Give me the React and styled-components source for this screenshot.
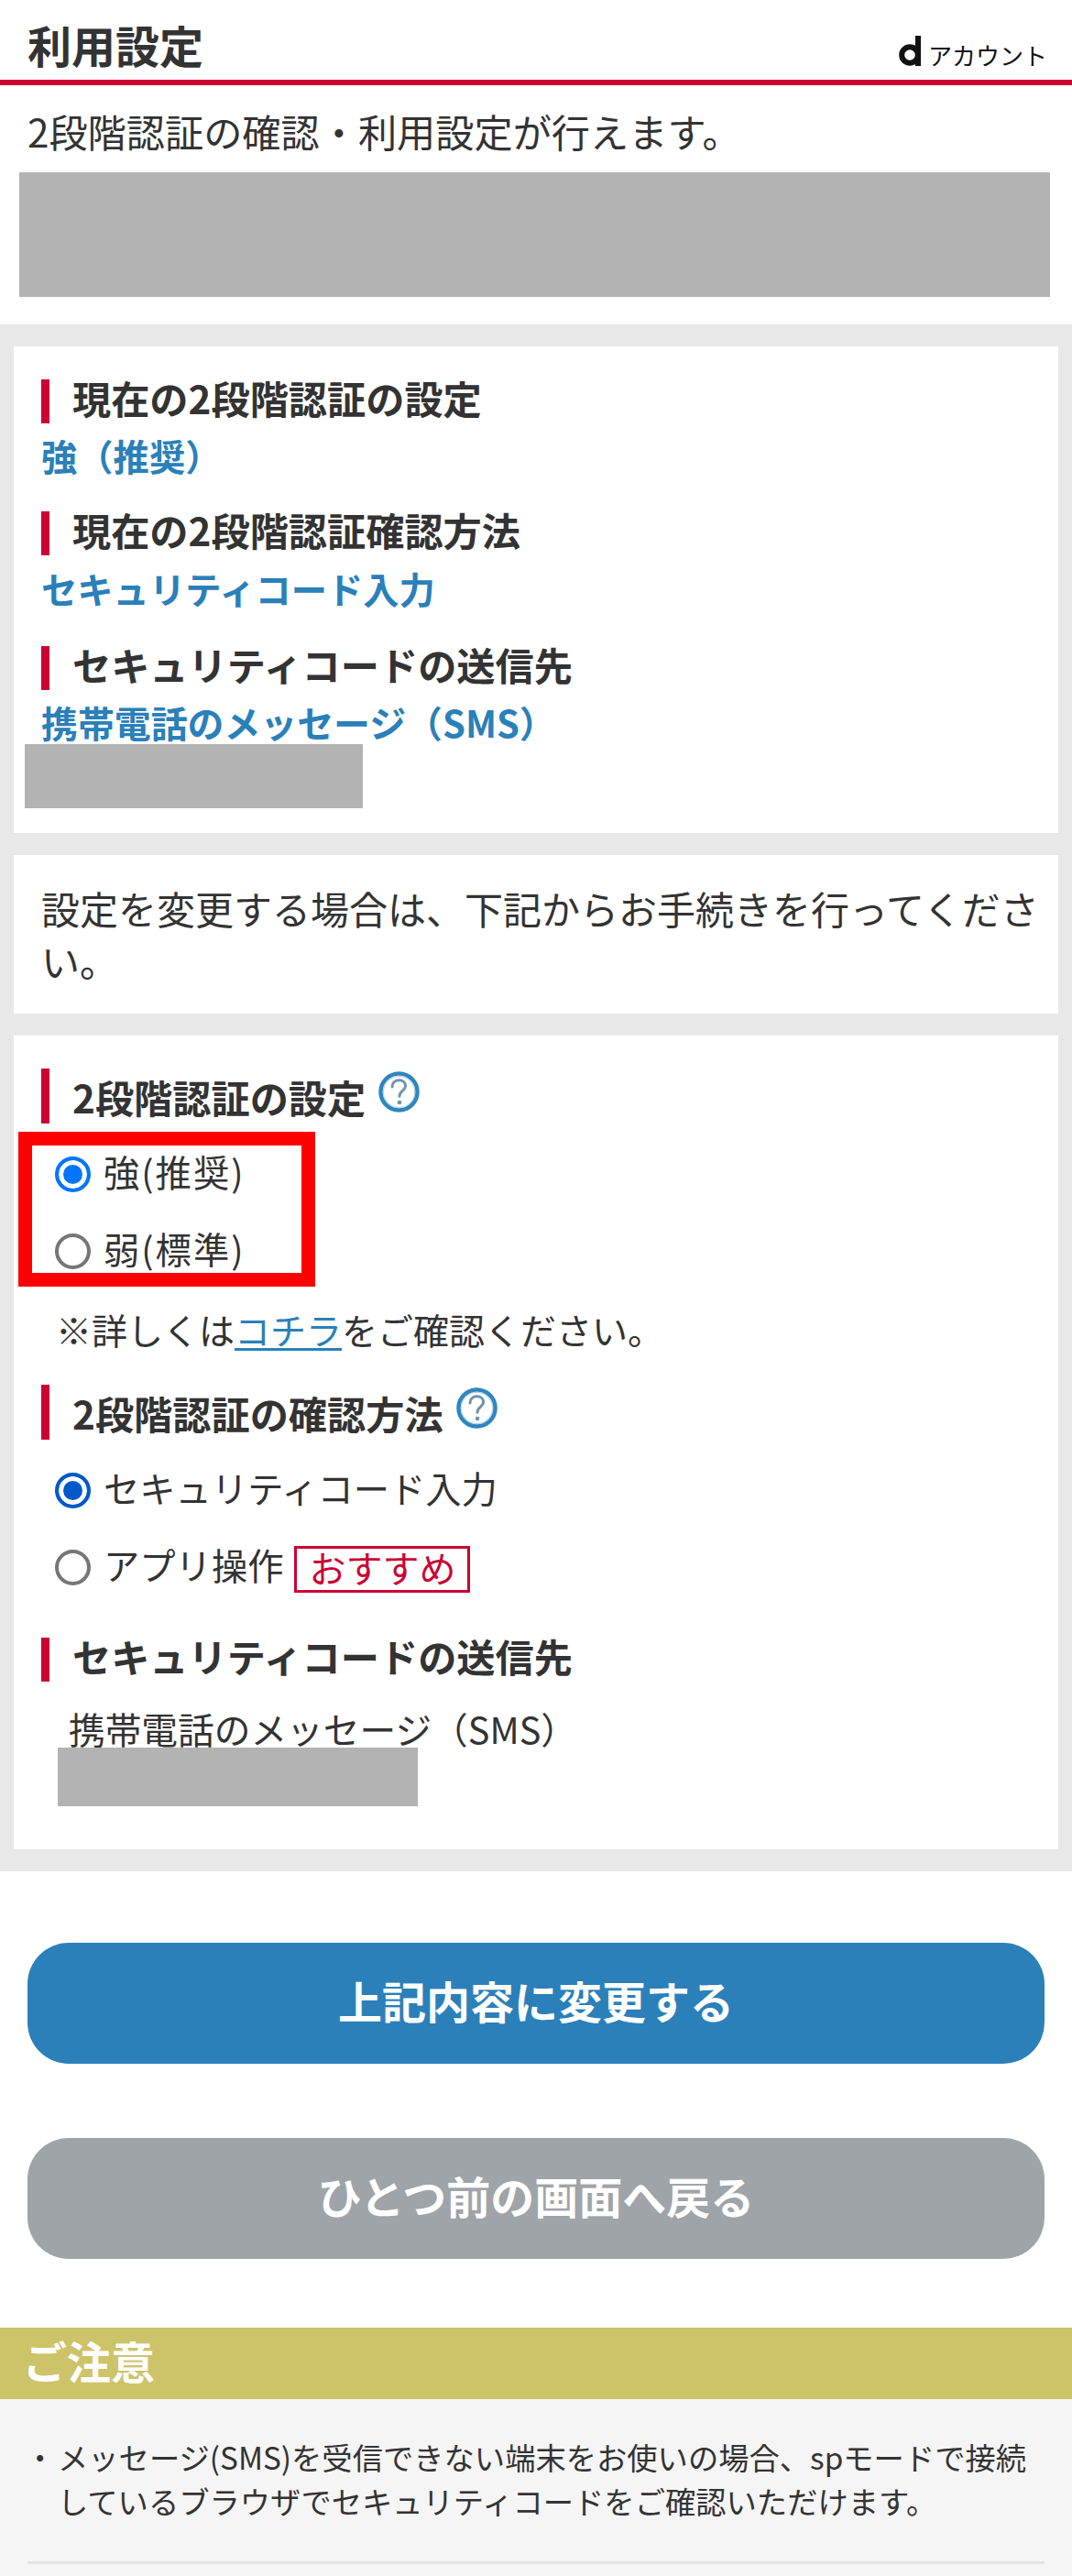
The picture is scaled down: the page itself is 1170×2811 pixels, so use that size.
import React from "react";
import styled, { createGlobalStyle } from "styled-components";

const Global = createGlobalStyle`
  html, body { margin: 0; padding: 0; background: #fff; }
  body { font-family: "Noto Sans CJK JP", "Noto Sans", sans-serif; color: #333; }
  * { box-sizing: border-box; }
`;

const Page = styled.div`
  width: 1170px;
  min-height: 2811px;
  display: flex;
  flex-direction: column;
  background: #fff;
  overflow: hidden;
`;

const Header = styled.header`
  height: 93px;
  border-bottom: 6px solid #cc0033;
  display: flex;
  justify-content: space-between;
  align-items: flex-end;
  padding: 0 30px 11px 30px;
`;

const Title = styled.h1`
  margin: 0;
  font-size: 48px;
  line-height: 56px;
  font-weight: 700;
  color: #333;
`;

const AccountLogo = styled.div`
  display: flex;
  align-items: flex-end;
  gap: 8px;
  height: 34px;
  margin: 0 -3px 4px 0;
`;

const AccountText = styled.span`
  font-size: 26px;
  line-height: 28px;
  color: #111;
  margin-bottom: -2px;
`;

const Lead = styled.p`
  margin: 20px 0 0;
  padding-left: 30px;
  font-size: 42.2px;
  line-height: 60px;
  color: #333;
`;

const Redacted = styled.div`
  background: #b3b3b3;
  width: ${(p) => p.$w}px;
  height: ${(p) => p.$h}px;
  margin-left: ${(p) => p.$ml}px;
  margin-top: ${(p) => p.$mt || 0}px;
`;

const GraySection = styled.section`
  margin-top: 30px;
  background: #e8e8e8;
  padding: 24px 15px;
  display: flex;
  flex-direction: column;
  gap: 24px;
`;

const Card = styled.div`
  background: #fff;
  padding: ${(p) => p.$pad};
`;

const SectionHeading = styled.h2`
  margin: ${(p) => p.$mt || 0}px 0 0;
  height: ${(p) => p.$h || 48}px;
  border-left: 9px solid #cc0033;
  padding: ${(p) => (p.$h ? "2px 0 0 25px" : "0 0 8px 25px")};
  display: flex;
  align-items: center;
  gap: 14px;
  font-size: 42.2px;
  line-height: 48px;
  font-weight: 700;
  color: #333;
  white-space: nowrap;
`;

const HelpSlot = styled.span`
  align-self: flex-start;
  margin-top: 1px;
  height: 45px;
`;

const Value = styled.div`
  margin-top: ${(p) => p.$mt}px;
  padding-bottom: 3px;
  font-size: ${(p) => p.$size || 39.3}px;
  line-height: ${(p) => p.$lh || 48}px;
  font-weight: 700;
  color: #2a80b9;
  white-space: nowrap;
`;

const Body = styled.p`
  margin: 0;
  font-size: 42px;
  line-height: 57px;
  color: #333;
`;

const RadioGroup = styled.div`
  position: relative;
  margin-top: ${(p) => p.$mt}px;
  padding-left: 15px;
  display: flex;
  flex-direction: column;
  gap: 45px;
`;

const Highlight = styled.div`
  position: absolute;
  left: -25px;
  top: -27px;
  width: 324px;
  height: 169px;
  border: 15px solid #ff0000;
  pointer-events: none;
`;

const RadioRow = styled.label`
  display: flex;
  align-items: center;
  gap: 14px;
  height: 39px;
  font-size: 39.3px;
  line-height: 39px;
  color: #333;
  white-space: nowrap;
`;

const Radio = styled.input.attrs({ type: "radio" })`
  appearance: none;
  margin: 0;
  flex: none;
  width: 39px;
  height: 39px;
  border-radius: 50%;
  border: 4px solid #767676;
  background: #fff;
  &:checked {
    border-color: ${(p) => p.$color};
    background: ${(p) => p.$color};
    box-shadow: inset 0 0 0 5px #fff;
  }
`;

const RadioLabel = styled.span`
  margin-bottom: 8px;
  letter-spacing: ${(p) => p.$ls || 0}px;
`;

const Badge = styled.span`
  margin: 3px 0 0 -2px;
  width: 192px;
  height: 51px;
  border: 3px solid #cc0033;
  padding-bottom: 4px;
  display: flex;
  align-items: center;
  justify-content: center;
  font-size: 40px;
  line-height: 45px;
  color: #cc0033;
`;

const Notice = styled.p`
  margin: 41px 0 0;
  padding-left: 16px;
  font-size: 39px;
  line-height: 48px;
  color: #333;
  white-space: nowrap;
`;

const Link = styled.a`
  color: #2a80b9;
  text-decoration: underline;
  text-underline-offset: 4px;
`;

const Destination = styled.div`
  margin-top: 30px;
  padding-left: 30px;
  font-size: 39.7px;
  line-height: 42px;
  color: #333;
  white-space: nowrap;
`;

const Buttons = styled.div`
  padding: 78px 30px 75px;
  display: flex;
  flex-direction: column;
  gap: 81px;
`;

const Button = styled.button`
  width: 1110px;
  height: 132px;
  border: 0;
  border-radius: 45px;
  background: ${(p) => p.$bg};
  color: #fff;
  font-family: inherit;
  font-size: 48px;
  font-weight: 700;
  padding: 0 0 8px;
`;

const NoteTitle = styled.h3`
  margin: 0;
  height: 78px;
  background: #cdc46a;
  color: #fff;
  display: flex;
  align-items: center;
  padding: 0 0 8px 25px;
  font-size: 48px;
  line-height: 56px;
  font-weight: 700;
`;

const NoteBody = styled.div`
  flex: 1;
  background: #f5f5f5;
  padding: 39px 30px 12px;
`;

const NoteList = styled.ul`
  margin: 0;
  padding: 0 0 42px;
  list-style: none;
  border-bottom: 3px solid #e5e5e0;
`;

const NoteItem = styled.li`
  position: relative;
  padding-left: 33px;
  font-size: 33.3px;
  line-height: 48px;
  color: #333;
  &::before {
    content: "・";
    position: absolute;
    left: -3px;
    top: 0;
  }
`;

const LogoD = () => (
  <svg width="24" height="33" viewBox="0 0 24 33" aria-hidden="true">
    <circle cx="12" cy="21" r="8.8" fill="none" stroke="#111" strokeWidth="6" />
    <rect x="18" y="0" width="6" height="33" fill="#111" />
  </svg>
);

const HelpIcon = () => (
  <HelpSlot>
    <svg width="45" height="45" viewBox="0 0 45 45" aria-hidden="true">
      <circle cx="22.5" cy="22.5" r="20" fill="#fff" stroke="#2f86bd" strokeWidth="4.5" />
      <circle cx="22.5" cy="22.5" r="17.2" fill="none" stroke="#b7d5e8" strokeWidth="1.2" />
      <path
        d="M15 17c0-4.6 3.4-7.2 7.6-7.2s7 2.7 7 6.2c0 4.9-6.6 5.5-6.6 11.2"
        fill="none"
        stroke="#6e93ad"
        strokeWidth="3"
        strokeLinecap="round"
      />
      <circle cx="23" cy="34" r="2.3" fill="#6e93ad" />
    </svg>
  </HelpSlot>
);

export default function App() {
  return (
    <Page>
      <Global />
      <Header>
        <Title>利用設定</Title>
        <AccountLogo>
          <LogoD />
          <AccountText>アカウント</AccountText>
        </AccountLogo>
      </Header>

      <Lead>2段階認証の確認・利用設定が行えます。</Lead>
      <Redacted $w={1125} $h={136} $ml={21} $mt={15} />

      <GraySection>
        <Card $pad="36px 30px 27px">
          <SectionHeading>現在の2段階認証の設定</SectionHeading>
          <Value $mt={11}>強（推奨）</Value>
          <SectionHeading $mt={34}>現在の2段階認証確認方法</SectionHeading>
          <Value $mt={12}>セキュリティコード入力</Value>
          <SectionHeading $mt={36}>セキュリティコードの送信先</SectionHeading>
          <Value $mt={14} $lh={42} $size={39.9}>携帯電話のメッセージ（SMS）</Value>
          <Redacted $w={369} $h={70} $ml={-18} />
        </Card>

        <Card $pad="29px 10px 30px 30px">
          <Body>設定を変更する場合は、下記からお手続きを行ってください。</Body>
        </Card>

        <Card $pad="36px 30px 47px">
          <SectionHeading $h={60}>
            2段階認証の設定
            <HelpIcon />
          </SectionHeading>
          <RadioGroup $mt={36}>
            <RadioRow>
              <Radio name="level" defaultChecked $color="#0075ff" />
              <RadioLabel $ls={2}>強(推奨)</RadioLabel>
            </RadioRow>
            <RadioRow>
              <Radio name="level" $color="#0075ff" />
              <RadioLabel $ls={2}>弱(標準)</RadioLabel>
            </RadioRow>
            <Highlight />
          </RadioGroup>
          <Notice>
            ※詳しくは<Link href="#">コチラ</Link>をご確認ください。
          </Notice>

          <SectionHeading $h={60} $mt={37}>
            2段階認証の確認方法
            <HelpIcon />
          </SectionHeading>
          <RadioGroup $mt={36}>
            <RadioRow>
              <Radio name="method" defaultChecked $color="#0059c8" />
              <RadioLabel>セキュリティコード入力</RadioLabel>
            </RadioRow>
            <RadioRow>
              <Radio name="method" $color="#0059c8" />
              <RadioLabel>アプリ操作</RadioLabel>
              <Badge>おすすめ</Badge>
            </RadioRow>
          </RadioGroup>

          <SectionHeading $mt={57}>セキュリティコードの送信先</SectionHeading>
          <Destination>携帯電話のメッセージ（SMS）</Destination>
          <Redacted $w={393} $h={64} $ml={18} />
        </Card>
      </GraySection>

      <Buttons>
        <Button $bg="#2b80b9">上記内容に変更する</Button>
        <Button $bg="#9fa4a8">ひとつ前の画面へ戻る</Button>
      </Buttons>

      <NoteTitle>ご注意</NoteTitle>
      <NoteBody>
        <NoteList>
          <NoteItem>
            メッセージ(SMS)を受信できない端末をお使いの場合、spモードで接続しているブラウザでセキュリティコードをご確認いただけます。
          </NoteItem>
        </NoteList>
      </NoteBody>
    </Page>
  );
}
